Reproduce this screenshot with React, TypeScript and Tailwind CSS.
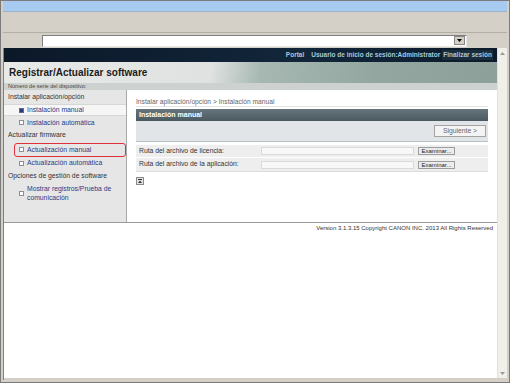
import { FC, ReactNode } from "react";

const font = "font-['Liberation_Sans',Arial,sans-serif]";

type BulletProps = { active?: boolean };

const Bullet: FC<BulletProps> = ({ active }) => (
  <span
    className={
      active
        ? "mr-[3px] inline-block h-[5px] w-[5px] shrink-0 border border-[#5a6a9a] bg-[#2a3a7a]"
        : "mr-[3px] inline-block h-[5px] w-[5px] shrink-0 border border-[#8a8fa0] bg-white"
    }
  />
);

const SectionRow: FC<{ children: ReactNode }> = ({ children }) => (
  <div className="flex h-[12.7px] items-center pl-[4px] text-[6.8px] text-[#333]">
    {children}
  </div>
);

type ItemProps = { label: string; active?: boolean; marked?: boolean };

const ItemRow: FC<ItemProps> = ({ label, active, marked }) => {
  if (marked) {
    return (
      <div className="ml-[10px] mt-[1px] flex h-[14px] items-center rounded-[3px] border border-[#e0303a] pl-[4px] text-[6.8px] text-[#2b3b86]">
        <Bullet />
        {label}
      </div>
    );
  }
  return (
    <div
      className={
        active
          ? "flex h-[12.7px] items-center border-y border-[#d6d6d6] bg-[#f6f6f6] pl-[15px] text-[6.8px] text-[#2b3b86]"
          : "flex h-[12.7px] items-center pl-[15px] text-[6.8px] text-[#2b3b86]"
      }
    >
      <Bullet active={active} />
      {label}
    </div>
  );
};

function Sidebar() {
  return (
    <div className="flex w-[123px] shrink-0 flex-col border-r border-[#a9a9a9] bg-[#e6e6e6] pt-[1px]">
      <SectionRow>Instalar aplicación/opción</SectionRow>
      <ItemRow label="Instalación manual" active />
      <ItemRow label="Instalación automática" />
      <SectionRow>Actualizar firmware</SectionRow>
      <ItemRow label="Actualización manual" marked />
      <ItemRow label="Actualización automática" />
      <SectionRow>Opciones de gestión de software</SectionRow>
      <div className="flex items-center pl-[15px] pt-[2px] text-[6.8px] leading-[9px] text-[#2b3b86]">
        <Bullet />
        <span>
          Mostrar registros/Prueba de
          <br />
          comunicación
        </span>
      </div>
    </div>
  );
}

const FileRow: FC<{ label: string; last?: boolean }> = ({ label, last }) => (
  <div
    className={
      last
        ? "flex h-[13px] items-center text-[6.8px] text-[#333]"
        : "flex h-[13px] items-center border-b border-white text-[6.8px] text-[#333]"
    }
  >
    <span className="w-[125px] shrink-0 pl-[3px]">{label}</span>
    <div className="h-[8px] w-[153px] border border-[#dadada] bg-[#f8f8f8]" />
    <button
      type="button"
      className="ml-[4px] flex h-[8px] w-[37px] items-center justify-center border border-[#9c9c9c] bg-[#ececec] text-[6px] leading-none text-[#222]"
    >
      Examinar...
    </button>
  </div>
);

function MainArea() {
  return (
    <div className="flex min-w-0 flex-1 flex-col pl-[7px] pr-[9px]">
      <div className="mt-[6px] h-[11px] border-b border-[#e2e2e2] text-[6.7px] leading-[11px] text-[#666]">
        Instalar aplicación/opción &gt; Instalación manual
      </div>
      <div className="mt-[2px] flex h-[12px] items-center bg-[linear-gradient(#67767c,#4a5a60)] pl-[3px] text-[7px] font-bold text-white">
        Instalación manual
      </div>
      <div className="flex h-[21px] items-center justify-end border-b border-[#b8c0c3] bg-[#e1e5e7] pr-[2px]">
        <button
          type="button"
          className="flex h-[12px] w-[52px] items-center justify-center border border-[#a3a3a3] bg-[#f4f4f4] text-[6.8px] text-[#666]"
        >
          Siguiente &gt;
        </button>
      </div>
      <div className="mt-[3px] flex flex-col border-b border-[#dcdcdc] bg-[#eeeeee]">
        <FileRow label="Ruta del archivo de licencia:" />
        <FileRow label="Ruta del archivo de la aplicación:" last />
      </div>
      <div className="mt-[5px]">
        <svg width="8" height="8" viewBox="0 0 8 8">
          <rect x="0.5" y="0.5" width="7" height="7" fill="#e4e4e4" stroke="#8a8a8a" />
          <rect x="2" y="2" width="4" height="1" fill="#333" />
          <path d="M2 6 L4 3.6 L6 6 Z" fill="#333" />
        </svg>
      </div>
    </div>
  );
}

function Scrollbar() {
  return (
    <div className="flex w-[10px] shrink-0 flex-col justify-between border-l border-[#e3e1dc] bg-[#f1efea]">
      <div className="flex h-[10px] items-center justify-center">
        <svg width="5" height="3" viewBox="0 0 5 3">
          <path d="M0 3 L2.5 0 L5 3 Z" fill="#9a9a9a" />
        </svg>
      </div>
      <div className="flex h-[10px] items-center justify-center">
        <svg width="5" height="3" viewBox="0 0 5 3">
          <path d="M0 0 L2.5 3 L5 0 Z" fill="#9a9a9a" />
        </svg>
      </div>
    </div>
  );
}

export default function App() {
  return (
    <div
      className={`${font} flex h-[383px] w-[510px] flex-col overflow-hidden border border-[#7b7b7b] bg-[#d4d0c8] px-[2px] pb-[2px]`}
    >
      <div className="h-[11px] shrink-0 border-b border-[#9fb3c8] bg-[#a6caf0]" />
      <div className="h-[21px] shrink-0 border-b border-[#b3afa7]" />
      <div className="flex h-[15px] shrink-0 items-center pl-[39px]">
        <div className="flex h-[12px] w-[425px] items-center justify-end border border-[#7f7f7f] border-b-[#e8e8e8] border-r-[#e8e8e8] bg-white pr-[1px]">
          <div className="flex h-[9px] w-[11px] items-center justify-center border border-[#888] bg-[#d4d0c8]">
            <svg width="5" height="3" viewBox="0 0 5 3">
              <path d="M0 0 L2.5 3 L5 0 Z" fill="#000" />
            </svg>
          </div>
        </div>
      </div>
      <div className="flex min-h-0 flex-1 border-l border-[#808080] pb-[2px]">
        <div className="flex min-w-0 flex-1 flex-col bg-white">
          <div className="flex h-[14px] shrink-0 items-center justify-end bg-[linear-gradient(90deg,#0b1828,#12263a_60%,#0c1b2b)] pr-[4px] text-[6.5px] font-bold text-[#a9c8d8]">
            <span className="mr-[7px]">Portal</span>
            <span>Usuario de inicio de sesión:Administrator</span>
            <span className="ml-[2px] bg-[#1a2d3c] px-[1px]">Finalizar sesión</span>
          </div>
          <div className="flex h-[21px] shrink-0 items-center bg-[linear-gradient(100deg,#e8eae8_0%,#dfe2e0_42%,#a7b8b2_52%,#93a7a0_75%,#8da19a_100%)] pl-[5px] text-[10px] font-bold text-[#1b1b1b]">
            Registrar/Actualizar software
          </div>
          <div className="flex h-[7px] shrink-0 items-center bg-[#cdd1cf] pl-[4px] text-[5.5px] leading-none text-[#444]">
            Número de serie del dispositivo:
          </div>
          <div className="flex h-[132px] shrink-0">
            <Sidebar />
            <div className="w-[2px] shrink-0 bg-white" />
            <MainArea />
          </div>
          <div className="shrink-0 border-t border-[#9a9a9a] pr-[4px] pt-[1px] text-right text-[6px] leading-[8px] text-[#333]">
            Version 3.1.3.15 Copyright CANON INC. 2013 All Rights Reserved
          </div>
        </div>
        <Scrollbar />
      </div>
    </div>
  );
}
